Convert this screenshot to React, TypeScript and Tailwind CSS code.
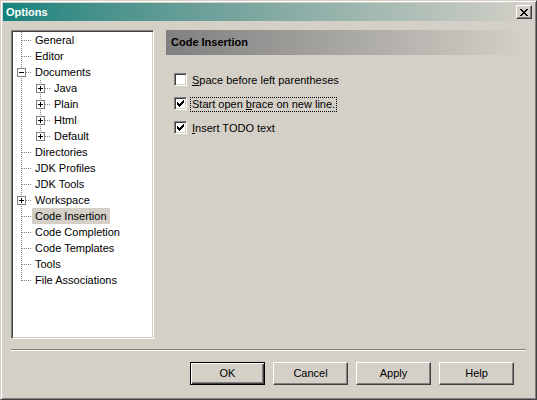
import type { ReactNode } from 'react';

type TreeNode = {
  label: string;
  level: 0 | 1;
  box?: 'plus' | 'minus';
  last?: boolean;
  selected?: boolean;
};

const nodes: TreeNode[] = [
  { label: 'General', level: 0 },
  { label: 'Editor', level: 0 },
  { label: 'Documents', level: 0, box: 'minus' },
  { label: 'Java', level: 1, box: 'plus' },
  { label: 'Plain', level: 1, box: 'plus' },
  { label: 'Html', level: 1, box: 'plus' },
  { label: 'Default', level: 1, box: 'plus', last: true },
  { label: 'Directories', level: 0 },
  { label: 'JDK Profiles', level: 0 },
  { label: 'JDK Tools', level: 0 },
  { label: 'Workspace', level: 0, box: 'plus' },
  { label: 'Code Insertion', level: 0, selected: true },
  { label: 'Code Completion', level: 0 },
  { label: 'Code Templates', level: 0 },
  { label: 'Tools', level: 0 },
  { label: 'File Associations', level: 0, last: true },
];

const STEP = 19;

// dotted connector lines + expand box for one tree row
function Gutter({ node }: { node: TreeNode }) {
  const width = STEP * (node.level + 1);
  const col = STEP * node.level + 8;
  const lines: ReactNode[] = [];

  if (node.level === 1) {
    // root trunk keeps running past the children of Documents
    lines.push(<line key="trunk" x1={8.5} y1={0} x2={8.5} y2={16} />);
  }
  lines.push(
    <line key="own" x1={col + 0.5} y1={0} x2={col + 0.5} y2={node.last ? 9 : 16} />
  );
  lines.push(
    <line key="elbow" x1={col + 1} y1={8.5} x2={width} y2={8.5} />
  );

  return (
    <svg width={width} height={16} className="shrink-0" shapeRendering="crispEdges">
      <g stroke="#808080" strokeDasharray="1 1">
        {lines}
      </g>
      {node.box && (
        <g>
          <rect x={col - 3.5} y={4.5} width={8} height={8} fill="#fff" stroke="#808080" />
          <line x1={col - 2} y1={8.5} x2={col + 3} y2={8.5} stroke="#000" />
          {node.box === 'plus' && (
            <line x1={col + 0.5} y1={6} x2={col + 0.5} y2={11} stroke="#000" />
          )}
        </g>
      )}
    </svg>
  );
}

function Tree() {
  return (
    <div className="w-[143px] h-[309px] shrink-0 bg-white border border-t-[#808080] border-l-[#808080] border-r-white border-b-white shadow-[inset_1px_1px_0_#404040,inset_-1px_-1px_0_#d4d0c8] p-px">
      {nodes.map((node) => (
        <div key={node.label} className="flex h-[16px] items-center">
          <Gutter node={node} />
          <span
            className={`h-[16px] leading-[16px] px-[3px] whitespace-nowrap ${
              node.selected ? 'bg-[#d4d0c8]' : ''
            }`}
          >
            {node.label}
          </span>
        </div>
      ))}
    </div>
  );
}

function CheckMark() {
  // classic 7x7 pixel tick
  const cols = [2, 3, 4, 3, 2, 1, 0];
  return (
    <svg width={7} height={7} shapeRendering="crispEdges">
      {cols.map((top, i) => (
        <rect key={i} x={i} y={top} width={1} height={3} fill="#000" />
      ))}
    </svg>
  );
}

function Checkbox({
  checked,
  focused,
  children,
}: {
  checked: boolean;
  focused?: boolean;
  children: ReactNode;
}) {
  return (
    <div className="flex items-start h-[13px]">
      <div className="w-[13px] h-[13px] shrink-0 flex items-center justify-center bg-white border border-t-[#808080] border-l-[#808080] border-r-white border-b-white shadow-[inset_1px_1px_0_#404040,inset_-1px_-1px_0_#d4d0c8]">
        {checked && <CheckMark />}
      </div>
      <span
        className={`ml-[3px] px-px h-[15px] leading-[13px] whitespace-nowrap border border-dotted ${
          focused ? 'border-black' : 'border-transparent'
        }`}
      >
        {children}
      </span>
    </div>
  );
}

function Button({ label, isDefault }: { label: string; isDefault?: boolean }) {
  return (
    <button
      className={
        isDefault
          ? 'w-[75px] h-[23px] bg-[#d4d0c8] border border-black shadow-[inset_1px_1px_0_#fff,inset_-1px_-1px_0_#404040,inset_-2px_-2px_0_#808080] text-[11px]'
          : 'w-[75px] h-[23px] bg-[#d4d0c8] border border-t-white border-l-white border-r-[#404040] border-b-[#404040] shadow-[inset_-1px_-1px_0_#808080] text-[11px]'
      }
    >
      {label}
    </button>
  );
}

function CloseGlyph() {
  const rows = [
    [0, 1, 6, 7],
    [1, 2, 5, 6],
    [2, 3, 4, 5],
    [3, 4],
    [2, 3, 4, 5],
    [1, 2, 5, 6],
    [0, 1, 6, 7],
  ];
  return (
    <svg width={8} height={7} shapeRendering="crispEdges">
      {rows.flatMap((xs, y) =>
        xs.map((x) => <rect key={`${x}-${y}`} x={x} y={y} width={1} height={1} fill="#000" />)
      )}
    </svg>
  );
}

export default function App() {
  return (
    <div className="w-[537px] h-[400px] overflow-hidden bg-[#d4d0c8] border border-t-[#d4d0c8] border-l-[#d4d0c8] border-r-[#404040] border-b-[#404040] shadow-[inset_1px_1px_0_#fff,inset_-1px_-1px_0_#808080] p-[2px] font-['Liberation_Sans',Arial,sans-serif] text-[11px] text-black">
      {/* Title bar */}
      <div className="h-[18px] flex items-center justify-between pl-[3px] pr-[2px] bg-linear-to-r from-[#0e837e] to-[#d4d0c8]">
        <span className="text-white font-bold text-[11px] leading-[18px]">Options</span>
        <div className="w-[16px] h-[14px] flex items-center justify-center bg-[#d4d0c8] border border-t-white border-l-white border-r-[#404040] border-b-[#404040] shadow-[inset_-1px_-1px_0_#808080]">
          <CloseGlyph />
        </div>
      </div>

      {/* Tree + settings page */}
      <div className="flex pt-[9px] px-[8px]">
        <Tree />
        <div className="flex-1 ml-[12px]">
          <div className="h-[25px] flex items-center pl-[5px] bg-linear-to-r from-[#808080] to-[#d4d0c8] font-bold">
            Code Insertion
          </div>
          <div className="mt-[18px] pl-[8px] flex flex-col gap-[11px]">
            <Checkbox checked={false}>
              <u>S</u>pace before left parentheses
            </Checkbox>
            <Checkbox checked focused>
              Start open <u>b</u>race on new line.
            </Checkbox>
            <Checkbox checked>
              <u>I</u>nsert TODO text
            </Checkbox>
          </div>
        </div>
      </div>

      {/* Separator */}
      <div className="mx-[8px] mt-[10px] h-[2px] border-t border-t-[#808080] border-b border-b-white" />

      {/* Dialog buttons */}
      <div className="flex justify-end gap-[8px] pr-[20px] mt-[11px]">
        <Button label="OK" isDefault />
        <Button label="Cancel" />
        <Button label="Apply" />
        <Button label="Help" />
      </div>
    </div>
  );
}
